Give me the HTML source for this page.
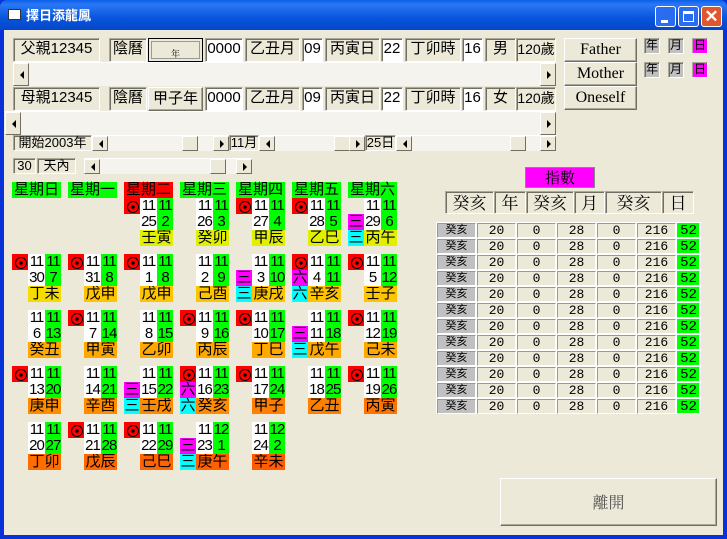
<!DOCTYPE html>
<html><head><meta charset="utf-8"><style>
*{box-sizing:border-box;margin:0;padding:0}
body{width:727px;height:539px;overflow:hidden;background:#0831d9;font-family:"Liberation Sans","Noto Sans CJK TC",sans-serif;position:relative}
.tb{position:absolute;left:0;top:0;width:727px;height:30px;background:linear-gradient(#0a5fe8,#2a78f5 15%,#0855dd 60%,#0646c8);border-radius:7px 7px 0 0}
.tt{position:absolute;left:26px;top:7px;color:#fff;font-weight:bold;font-size:13px;font-family:"Noto Sans CJK TC",sans-serif;line-height:16px}
.client{position:absolute;left:4px;top:30px;width:719px;height:505px;background:#ece9d8}
.a{position:absolute;line-height:1;white-space:nowrap}
.sk{position:absolute;border:1px solid;border-color:#aca899 #fff #fff #aca899;box-shadow:inset 1px 1px 0 #716f64;background:#ece9d8;font-size:15px;text-align:center;line-height:20px;font-family:"Liberation Sans","Noto Sans CJK TC",sans-serif}
.wh{background:#fff}
.bt{position:absolute;border:1px solid;border-color:#fff #716f64 #716f64 #fff;box-shadow:inset -1px -1px 0 #aca899;background:#ece9d8;text-align:center;font-size:15px;line-height:21px;font-family:"Liberation Serif","Noto Serif CJK SC",serif}
.sb{position:absolute;background:#f4f3ee;border-top:1px solid #fff}
.ar{position:absolute;top:0;width:16px;height:100%;background:#ece9d8;border:1px solid;border-color:#fff #716f64 #716f64 #fff}
.ar:after{content:"";position:absolute;top:50%;left:5px;margin-top:-4px;border:4px solid transparent}
.al:after{border-right-color:#000;left:2px}
.arr:after{border-left-color:#000;left:6px}
.th{position:absolute;top:0;height:100%;width:16px;background:#ece9d8;border:1px solid;border-color:#fff #716f64 #716f64 #fff}
.cl{position:absolute;width:49px;height:48px;font-size:15px;line-height:16px;font-family:"Liberation Sans","Noto Sans CJK TC",sans-serif}
.cl div{position:absolute;height:16px;text-align:center;overflow:hidden;white-space:nowrap}
.i{left:0;top:0;width:16px;background:#f00}
.i:after{content:"";position:absolute;left:3px;top:3px;width:10px;height:10px;border:1px solid #000;border-radius:50%;background:radial-gradient(#000 1.5px,transparent 2px)}
.w1{left:16px;top:0;width:17px;background:#fff;letter-spacing:-1px}
.g1{left:33px;top:0;width:16px;background:#0f0;letter-spacing:-1px}
.w2{left:16px;top:16px;width:17px;background:#fff;letter-spacing:-1px}
.g2{left:33px;top:16px;width:16px;background:#0f0;letter-spacing:-1px}
.z{left:16px;top:32px;width:33px;font-size:15px}
.m{left:0;top:16px;width:16px;background:#f0f}
.c{left:0;top:32px;width:16px;background:#0ff}
.hd{position:absolute;top:182px;width:49px;height:16px;background:#0f0;font-size:15px;line-height:16px;text-align:center}
.tr{position:absolute;height:15px;font-size:13px;line-height:14px}
.tr div{position:absolute;top:0;height:15px;border:1px solid;border-color:#999 #fff #fff #999;background:#ece9d8;text-align:center;font-family:"Liberation Mono","Noto Sans CJK TC",monospace}
</style></head><body>
<div class="tb"><div class="a" style="left:8px;top:9px;width:13px;height:11px;background:#fff;border:1px solid #333"></div><div class="tt">擇日添龍鳳</div>
<div class="a" style="left:655px;top:6px;width:21px;height:21px;background:#2a6cf0;border:1px solid #fff;border-radius:3px"><div class="a" style="left:5px;top:13px;width:7px;height:3px;background:#fff"></div></div>
<div class="a" style="left:678px;top:6px;width:21px;height:21px;background:#2a6cf0;border:1px solid #fff;border-radius:3px"><div class="a" style="left:4px;top:4px;width:11px;height:11px;border:1px solid #fff;border-top-width:3px"></div></div>
<div class="a" style="left:701px;top:6px;width:21px;height:21px;background:#e0562f;border:1px solid #fff;border-radius:3px;color:#fff;font-size:17px;font-weight:bold;text-align:center;line-height:19px">✕</div>
</div>
<div class="client"></div>

<!-- row 1 -->
<div class="sk" style="left:13px;top:38px;width:87px;height:24px">父親12345</div>
<div class="sk" style="left:109px;top:38px;width:38px;height:24px">陰曆</div>
<div class="bt" style="left:148px;top:38px;width:55px;height:24px;border-color:#000;box-shadow:inset 0 0 0 2px #ece9d8, inset 0 0 0 3px #999;font-size:9px;line-height:30px">年</div>
<div class="sk wh" style="left:205px;top:38px;width:38px;height:24px">0000</div>
<div class="sk" style="left:245px;top:38px;width:55px;height:24px">乙丑月</div>
<div class="sk wh" style="left:302px;top:38px;width:21px;height:24px">09</div>
<div class="sk" style="left:325px;top:38px;width:55px;height:24px">丙寅日</div>
<div class="sk wh" style="left:381px;top:38px;width:22px;height:24px">22</div>
<div class="sk" style="left:405px;top:38px;width:56px;height:24px">丁卯時</div>
<div class="sk wh" style="left:462px;top:38px;width:21px;height:24px">16</div>
<div class="sk" style="left:485px;top:38px;width:31px;height:24px">男</div>
<div class="sk" style="left:516px;top:38px;width:40px;height:24px;font-size:14px">120歲</div>
<div class="sb" style="left:13px;top:62px;width:543px;height:24px"><div class="ar al" style="left:0"></div><div class="ar arr" style="right:0"></div></div>
<!-- row 2 -->
<div class="sk" style="left:13px;top:87px;width:87px;height:24px">母親12345</div>
<div class="sk" style="left:109px;top:87px;width:38px;height:24px">陰曆</div>
<div class="bt" style="left:148px;top:87px;width:55px;height:24px;font-family:'Liberation Sans','Noto Sans CJK TC',sans-serif">甲子年</div>
<div class="sk wh" style="left:205px;top:87px;width:38px;height:24px">0000</div>
<div class="sk" style="left:245px;top:87px;width:55px;height:24px">乙丑月</div>
<div class="sk wh" style="left:302px;top:87px;width:21px;height:24px">09</div>
<div class="sk" style="left:325px;top:87px;width:55px;height:24px">丙寅日</div>
<div class="sk wh" style="left:381px;top:87px;width:22px;height:24px">22</div>
<div class="sk" style="left:405px;top:87px;width:56px;height:24px">丁卯時</div>
<div class="sk wh" style="left:462px;top:87px;width:21px;height:24px">16</div>
<div class="sk" style="left:485px;top:87px;width:31px;height:24px">女</div>
<div class="sk" style="left:516px;top:87px;width:40px;height:24px;font-size:14px">120歲</div>
<div class="sb" style="left:5px;top:111px;width:551px;height:24px"><div class="ar al" style="left:0"></div><div class="ar arr" style="right:0"></div></div>
<!-- row 3 -->
<div class="sk" style="left:13px;top:135px;width:79px;height:16px;font-size:13px;line-height:14px">開始2003年</div>
<div class="sb" style="left:92px;top:135px;width:137px;height:16px"><div class="ar al" style="left:0"></div><div class="th" style="left:90px"></div><div class="ar arr" style="right:0"></div></div>
<div class="sk" style="left:229px;top:135px;width:30px;height:16px;font-size:13px;line-height:14px">11月</div>
<div class="sb" style="left:259px;top:135px;width:106px;height:16px"><div class="ar al" style="left:0"></div><div class="th" style="left:75px"></div><div class="ar arr" style="right:0"></div></div>
<div class="sk" style="left:365px;top:135px;width:31px;height:16px;font-size:13px;line-height:14px">25日</div>
<div class="sb" style="left:396px;top:135px;width:160px;height:16px"><div class="ar al" style="left:0"></div><div class="th" style="left:114px"></div><div class="ar arr" style="right:0"></div></div>
<!-- row 4 -->
<div class="sk" style="left:13px;top:158px;width:23px;height:16px;font-size:13px;line-height:14px">30</div>
<div class="sk" style="left:37px;top:158px;width:39px;height:16px;font-size:13px;line-height:14px">天內</div>
<div class="sb" style="left:84px;top:158px;width:168px;height:16px"><div class="ar al" style="left:0"></div><div class="th" style="left:126px"></div><div class="ar arr" style="right:0"></div></div>

<div class="bt" style="left:564px;top:38px;width:73px;height:24px;font-size:16px">Father</div>
<div class="bt" style="left:564px;top:62px;width:73px;height:24px;font-size:16px">Mother</div>
<div class="bt" style="left:564px;top:86px;width:73px;height:24px;font-size:16px">Oneself</div>
<div class="sk" style="left:644px;top:38px;width:16px;height:16px;background:#c0c0c0;font-size:12px;line-height:13px">年</div>
<div class="sk" style="left:668px;top:38px;width:16px;height:16px;background:#c0c0c0;font-size:12px;line-height:13px">月</div>
<div class="sk" style="left:692px;top:38px;width:16px;height:16px;background:#f0f;font-size:12px;line-height:13px">日</div>
<div class="sk" style="left:644px;top:62px;width:16px;height:16px;background:#c0c0c0;font-size:12px;line-height:13px">年</div>
<div class="sk" style="left:668px;top:62px;width:16px;height:16px;background:#c0c0c0;font-size:12px;line-height:13px">月</div>
<div class="sk" style="left:692px;top:62px;width:16px;height:16px;background:#f0f;font-size:12px;line-height:13px">日</div>

<!-- calendar headers -->
<div class="hd" style="left:12px">星期日</div>
<div class="hd" style="left:68px">星期一</div>
<div class="hd" style="left:124px;background:#f00">星期二</div>
<div class="hd" style="left:180px">星期三</div>
<div class="hd" style="left:236px">星期四</div>
<div class="hd" style="left:292px">星期五</div>
<div class="hd" style="left:348px">星期六</div>

<!-- week 1 -->
<div class="cl" style="left:124px;top:198px"><div class="i"></div><div class="w1">11</div><div class="g1">11</div><div class="w2">25</div><div class="g2">2</div><div class="z" style="background:#e0f000">壬寅</div></div>
<div class="cl" style="left:180px;top:198px"><div class="w1">11</div><div class="g1">11</div><div class="w2">26</div><div class="g2">3</div><div class="z" style="background:#e0f000">癸卯</div></div>
<div class="cl" style="left:236px;top:198px"><div class="i"></div><div class="w1">11</div><div class="g1">11</div><div class="w2">27</div><div class="g2">4</div><div class="z" style="background:#e0f000">甲辰</div></div>
<div class="cl" style="left:292px;top:198px"><div class="i"></div><div class="w1">11</div><div class="g1">11</div><div class="w2">28</div><div class="g2">5</div><div class="z" style="background:#e0f000">乙巳</div></div>
<div class="cl" style="left:348px;top:198px"><div class="w1">11</div><div class="g1">11</div><div class="m">三</div><div class="c">三</div><div class="w2">29</div><div class="g2">6</div><div class="z" style="background:#e0f000">丙午</div></div>
<!-- week 2 -->
<div class="cl" style="left:12px;top:254px"><div class="i"></div><div class="w1">11</div><div class="g1">11</div><div class="w2">30</div><div class="g2">7</div><div class="z" style="background:#f5dc00">丁未</div></div>
<div class="cl" style="left:68px;top:254px"><div class="i"></div><div class="w1">11</div><div class="g1">11</div><div class="w2">31</div><div class="g2">8</div><div class="z" style="background:#ffc400">戊申</div></div>
<div class="cl" style="left:124px;top:254px"><div class="i"></div><div class="w1">11</div><div class="g1">11</div><div class="w2">1</div><div class="g2">8</div><div class="z" style="background:#ffc400">戊申</div></div>
<div class="cl" style="left:180px;top:254px"><div class="w1">11</div><div class="g1">11</div><div class="w2">2</div><div class="g2">9</div><div class="z" style="background:#ffc400">己酉</div></div>
<div class="cl" style="left:236px;top:254px"><div class="w1">11</div><div class="g1">11</div><div class="m">三</div><div class="c">三</div><div class="w2">3</div><div class="g2">10</div><div class="z" style="background:#ffc400">庚戌</div></div>
<div class="cl" style="left:292px;top:254px"><div class="i"></div><div class="w1">11</div><div class="g1">11</div><div class="m">六</div><div class="c">六</div><div class="w2">4</div><div class="g2">11</div><div class="z" style="background:#ffc400">辛亥</div></div>
<div class="cl" style="left:348px;top:254px"><div class="i"></div><div class="w1">11</div><div class="g1">11</div><div class="w2">5</div><div class="g2">12</div><div class="z" style="background:#ffc400">壬子</div></div>
<!-- week 3 -->
<div class="cl" style="left:12px;top:310px"><div class="w1">11</div><div class="g1">11</div><div class="w2">6</div><div class="g2">13</div><div class="z" style="background:#ffa800">癸丑</div></div>
<div class="cl" style="left:68px;top:310px"><div class="i"></div><div class="w1">11</div><div class="g1">11</div><div class="w2">7</div><div class="g2">14</div><div class="z" style="background:#ffa800">甲寅</div></div>
<div class="cl" style="left:124px;top:310px"><div class="w1">11</div><div class="g1">11</div><div class="w2">8</div><div class="g2">15</div><div class="z" style="background:#ffa800">乙卯</div></div>
<div class="cl" style="left:180px;top:310px"><div class="i"></div><div class="w1">11</div><div class="g1">11</div><div class="w2">9</div><div class="g2">16</div><div class="z" style="background:#ffa800">丙辰</div></div>
<div class="cl" style="left:236px;top:310px"><div class="i"></div><div class="w1">11</div><div class="g1">11</div><div class="w2">10</div><div class="g2">17</div><div class="z" style="background:#ffa800">丁巳</div></div>
<div class="cl" style="left:292px;top:310px"><div class="w1">11</div><div class="g1">11</div><div class="m">三</div><div class="c">三</div><div class="w2">11</div><div class="g2">18</div><div class="z" style="background:#ffa800">戊午</div></div>
<div class="cl" style="left:348px;top:310px"><div class="i"></div><div class="w1">11</div><div class="g1">11</div><div class="w2">12</div><div class="g2">19</div><div class="z" style="background:#ffa800">己未</div></div>
<!-- week 4 -->
<div class="cl" style="left:12px;top:366px"><div class="i"></div><div class="w1">11</div><div class="g1">11</div><div class="w2">13</div><div class="g2">20</div><div class="z" style="background:#ff8c00">庚申</div></div>
<div class="cl" style="left:68px;top:366px"><div class="w1">11</div><div class="g1">11</div><div class="w2">14</div><div class="g2">21</div><div class="z" style="background:#ff8c00">辛酉</div></div>
<div class="cl" style="left:124px;top:366px"><div class="w1">11</div><div class="g1">11</div><div class="m">三</div><div class="c">三</div><div class="w2">15</div><div class="g2">22</div><div class="z" style="background:#ff8c00">壬戌</div></div>
<div class="cl" style="left:180px;top:366px"><div class="i"></div><div class="w1">11</div><div class="g1">11</div><div class="m">六</div><div class="c">六</div><div class="w2">16</div><div class="g2">23</div><div class="z" style="background:#ff8c00">癸亥</div></div>
<div class="cl" style="left:236px;top:366px"><div class="i"></div><div class="w1">11</div><div class="g1">11</div><div class="w2">17</div><div class="g2">24</div><div class="z" style="background:#ff8000">甲子</div></div>
<div class="cl" style="left:292px;top:366px"><div class="w1">11</div><div class="g1">11</div><div class="w2">18</div><div class="g2">25</div><div class="z" style="background:#ff8000">乙丑</div></div>
<div class="cl" style="left:348px;top:366px"><div class="i"></div><div class="w1">11</div><div class="g1">11</div><div class="w2">19</div><div class="g2">26</div><div class="z" style="background:#ff7400">丙寅</div></div>
<!-- week 5 -->
<div class="cl" style="left:12px;top:422px"><div class="w1">11</div><div class="g1">11</div><div class="w2">20</div><div class="g2">27</div><div class="z" style="background:#ff6c00">丁卯</div></div>
<div class="cl" style="left:68px;top:422px"><div class="i"></div><div class="w1">11</div><div class="g1">11</div><div class="w2">21</div><div class="g2">28</div><div class="z" style="background:#ff6800">戊辰</div></div>
<div class="cl" style="left:124px;top:422px"><div class="i"></div><div class="w1">11</div><div class="g1">11</div><div class="w2">22</div><div class="g2">29</div><div class="z" style="background:#ff6400">己巳</div></div>
<div class="cl" style="left:180px;top:422px"><div class="w1">11</div><div class="g1">12</div><div class="m">三</div><div class="c">三</div><div class="w2">23</div><div class="g2">1</div><div class="z" style="background:#ff6000">庚午</div></div>
<div class="cl" style="left:236px;top:422px"><div class="w1">11</div><div class="g1">12</div><div class="w2">24</div><div class="g2">2</div><div class="z" style="background:#ff5c00">辛未</div></div>

<!-- index area -->
<div class="a" style="left:525px;top:167px;width:70px;height:21px;background:#f0f;border:1px solid #888;text-align:center;font-size:15px;line-height:19px;font-family:'Noto Serif CJK SC',serif">指數</div>
<div class="sk" style="left:445px;top:191px;width:49px;height:23px;font-size:17px;font-family:'Noto Serif CJK SC',serif">癸亥</div>
<div class="sk" style="left:494px;top:191px;width:32px;height:23px;font-size:17px;font-family:'Noto Serif CJK SC',serif">年</div>
<div class="sk" style="left:526px;top:191px;width:48px;height:23px;font-size:17px;font-family:'Noto Serif CJK SC',serif">癸亥</div>
<div class="sk" style="left:574px;top:191px;width:31px;height:23px;font-size:17px;font-family:'Noto Serif CJK SC',serif">月</div>
<div class="sk" style="left:605px;top:191px;width:57px;height:23px;font-size:17px;font-family:'Noto Serif CJK SC',serif">癸亥</div>
<div class="sk" style="left:662px;top:191px;width:32px;height:23px;font-size:17px;font-family:'Noto Serif CJK SC',serif">日</div>

<div class="a" style="left:436px;top:222px;width:265px;height:192px;background:#fff"></div>
<div class="tr" style="left:437px;top:223px;width:264px"><div style="left:0;width:39px;background:#c0c0c0;font-size:11px">癸亥</div><div style="left:40px;width:39px">20</div><div style="left:80px;width:39px">0</div><div style="left:120px;width:39px">28</div><div style="left:160px;width:39px">0</div><div style="left:200px;width:39px">216</div><div style="left:240px;width:23px;background:#0f0;font-size:14px">52</div></div>
<div class="tr" style="left:437px;top:239px;width:264px"><div style="left:0;width:39px;background:#c0c0c0;font-size:11px">癸亥</div><div style="left:40px;width:39px">20</div><div style="left:80px;width:39px">0</div><div style="left:120px;width:39px">28</div><div style="left:160px;width:39px">0</div><div style="left:200px;width:39px">216</div><div style="left:240px;width:23px;background:#0f0;font-size:14px">52</div></div>
<div class="tr" style="left:437px;top:255px;width:264px"><div style="left:0;width:39px;background:#c0c0c0;font-size:11px">癸亥</div><div style="left:40px;width:39px">20</div><div style="left:80px;width:39px">0</div><div style="left:120px;width:39px">28</div><div style="left:160px;width:39px">0</div><div style="left:200px;width:39px">216</div><div style="left:240px;width:23px;background:#0f0;font-size:14px">52</div></div>
<div class="tr" style="left:437px;top:271px;width:264px"><div style="left:0;width:39px;background:#c0c0c0;font-size:11px">癸亥</div><div style="left:40px;width:39px">20</div><div style="left:80px;width:39px">0</div><div style="left:120px;width:39px">28</div><div style="left:160px;width:39px">0</div><div style="left:200px;width:39px">216</div><div style="left:240px;width:23px;background:#0f0;font-size:14px">52</div></div>
<div class="tr" style="left:437px;top:287px;width:264px"><div style="left:0;width:39px;background:#c0c0c0;font-size:11px">癸亥</div><div style="left:40px;width:39px">20</div><div style="left:80px;width:39px">0</div><div style="left:120px;width:39px">28</div><div style="left:160px;width:39px">0</div><div style="left:200px;width:39px">216</div><div style="left:240px;width:23px;background:#0f0;font-size:14px">52</div></div>
<div class="tr" style="left:437px;top:303px;width:264px"><div style="left:0;width:39px;background:#c0c0c0;font-size:11px">癸亥</div><div style="left:40px;width:39px">20</div><div style="left:80px;width:39px">0</div><div style="left:120px;width:39px">28</div><div style="left:160px;width:39px">0</div><div style="left:200px;width:39px">216</div><div style="left:240px;width:23px;background:#0f0;font-size:14px">52</div></div>
<div class="tr" style="left:437px;top:319px;width:264px"><div style="left:0;width:39px;background:#c0c0c0;font-size:11px">癸亥</div><div style="left:40px;width:39px">20</div><div style="left:80px;width:39px">0</div><div style="left:120px;width:39px">28</div><div style="left:160px;width:39px">0</div><div style="left:200px;width:39px">216</div><div style="left:240px;width:23px;background:#0f0;font-size:14px">52</div></div>
<div class="tr" style="left:437px;top:335px;width:264px"><div style="left:0;width:39px;background:#c0c0c0;font-size:11px">癸亥</div><div style="left:40px;width:39px">20</div><div style="left:80px;width:39px">0</div><div style="left:120px;width:39px">28</div><div style="left:160px;width:39px">0</div><div style="left:200px;width:39px">216</div><div style="left:240px;width:23px;background:#0f0;font-size:14px">52</div></div>
<div class="tr" style="left:437px;top:351px;width:264px"><div style="left:0;width:39px;background:#c0c0c0;font-size:11px">癸亥</div><div style="left:40px;width:39px">20</div><div style="left:80px;width:39px">0</div><div style="left:120px;width:39px">28</div><div style="left:160px;width:39px">0</div><div style="left:200px;width:39px">216</div><div style="left:240px;width:23px;background:#0f0;font-size:14px">52</div></div>
<div class="tr" style="left:437px;top:367px;width:264px"><div style="left:0;width:39px;background:#c0c0c0;font-size:11px">癸亥</div><div style="left:40px;width:39px">20</div><div style="left:80px;width:39px">0</div><div style="left:120px;width:39px">28</div><div style="left:160px;width:39px">0</div><div style="left:200px;width:39px">216</div><div style="left:240px;width:23px;background:#0f0;font-size:14px">52</div></div>
<div class="tr" style="left:437px;top:383px;width:264px"><div style="left:0;width:39px;background:#c0c0c0;font-size:11px">癸亥</div><div style="left:40px;width:39px">20</div><div style="left:80px;width:39px">0</div><div style="left:120px;width:39px">28</div><div style="left:160px;width:39px">0</div><div style="left:200px;width:39px">216</div><div style="left:240px;width:23px;background:#0f0;font-size:14px">52</div></div>
<div class="tr" style="left:437px;top:399px;width:264px"><div style="left:0;width:39px;background:#c0c0c0;font-size:11px">癸亥</div><div style="left:40px;width:39px">20</div><div style="left:80px;width:39px">0</div><div style="left:120px;width:39px">28</div><div style="left:160px;width:39px">0</div><div style="left:200px;width:39px">216</div><div style="left:240px;width:23px;background:#0f0;font-size:14px">52</div></div>

<div class="bt" style="left:500px;top:478px;width:217px;height:48px;line-height:46px;font-size:16px;color:#555;font-family:'Noto Serif CJK SC',serif">離開</div>
</body></html>
